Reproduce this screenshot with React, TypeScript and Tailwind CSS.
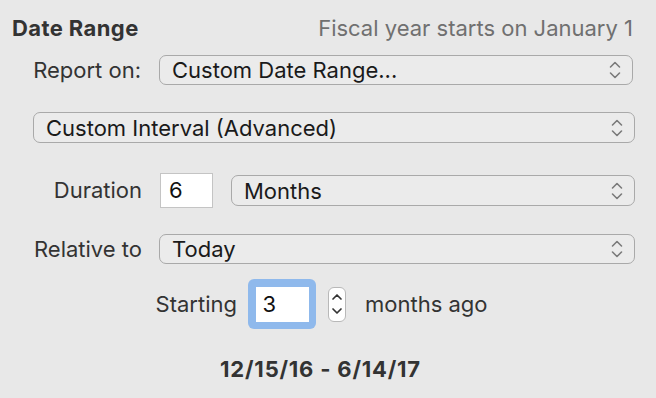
import React from "react";

const Chevrons = ({ className = "" }: { className?: string }) => (
  <svg width="12" height="20" viewBox="0 0 12 20" className={className} fill="none">
    <path d="M1.5 7 L6 2.5 L10.5 7" stroke="#7a7a7a" strokeWidth="1.6" strokeLinecap="round" strokeLinejoin="round" />
    <path d="M1.5 13 L6 17.5 L10.5 13" stroke="#7a7a7a" strokeWidth="1.6" strokeLinecap="round" strokeLinejoin="round" />
  </svg>
);

const Popup = ({ text, className = "" }: { text: string; className?: string }) => (
  <div
    className={
      "flex items-center justify-between rounded-[7px] border-[1.5px] border-[#a9a9a9] bg-[#ebebeb] pl-[12px] pr-[11px] text-[#1a1a1a] " +
      className
    }
  >
    <span className="leading-none">{text}</span>
    <Chevrons />
  </div>
);

export default function App() {
  return (
    <div
      className="w-[656px] h-[398px] bg-[#e8e8e8] text-[22px] text-[#333] overflow-hidden"
      style={{ fontFamily: "Inter, 'Liberation Sans', sans-serif" }}
    >
      <div className="flex items-center justify-between pl-[12px] pr-[23px] pt-[14px] h-[42px]">
        <span className="font-bold text-[#333] text-[22px] tracking-[0.4px]">Date Range</span>
        <span className="text-[#707070] text-[22px]">Fiscal year starts on January 1</span>
      </div>

      <div className="flex items-center mt-[13px] h-[30px] pr-[23px]">
        <span className="w-[142px] text-right pr-[1px]">Report on:</span>
        <Popup text="Custom Date Range..." className="ml-[17px] flex-1 h-[30px]" />
      </div>

      <div className="flex items-center mt-[27px] h-[31px] pl-[33px] pr-[21px]">
        <Popup text="Custom Interval (Advanced)" className="flex-1 h-[31px]" />
      </div>

      <div className="flex items-center mt-[30px] h-[35px] pr-[21px]">
        <span className="w-[142px] text-right">Duration</span>
        <div className="ml-[18px] w-[53px] h-[35px] bg-white border border-[#c4c4c4] flex items-center pl-[8px] text-[#111]">
          6
        </div>
        <Popup text="Months" className="ml-[18px] flex-1 h-[31px]" />
      </div>

      <div className="flex items-center mt-[26px] h-[30px] pr-[21px]">
        <span className="w-[142px] text-right">Relative to</span>
        <Popup text="Today" className="ml-[17px] flex-1 h-[30px]" />
      </div>

      <div className="flex items-center mt-[15px] h-[50px]">
        <span className="w-[237px] text-right">Starting</span>
        <div className="ml-[11px] w-[68px] h-[50px] rounded-[6px] bg-[#8fb9ec] flex items-center justify-center">
          <div className="w-[53px] h-[35px] bg-white flex items-center pl-[7px] text-[#111]">3</div>
        </div>
        <div className="ml-[12px] w-[18px] h-[35px] rounded-[6px] bg-white border border-[#b8b8b8] flex items-center justify-center">
          <svg width="12" height="28" viewBox="0 0 12 28" fill="none">
            <path d="M2 9 L6 5 L10 9" stroke="#333" strokeWidth="1.7" strokeLinecap="round" strokeLinejoin="round" />
            <path d="M2 19 L6 23 L10 19" stroke="#333" strokeWidth="1.7" strokeLinecap="round" strokeLinejoin="round" />
          </svg>
        </div>
        <span className="ml-[19px]">months ago</span>
      </div>

      <div className="flex justify-center mt-[24px] pr-[15px]">
        <span className="font-bold text-[#333] text-[22px] tracking-[0.8px]">12/15/16 - 6/14/17</span>
      </div>
    </div>
  );
}
